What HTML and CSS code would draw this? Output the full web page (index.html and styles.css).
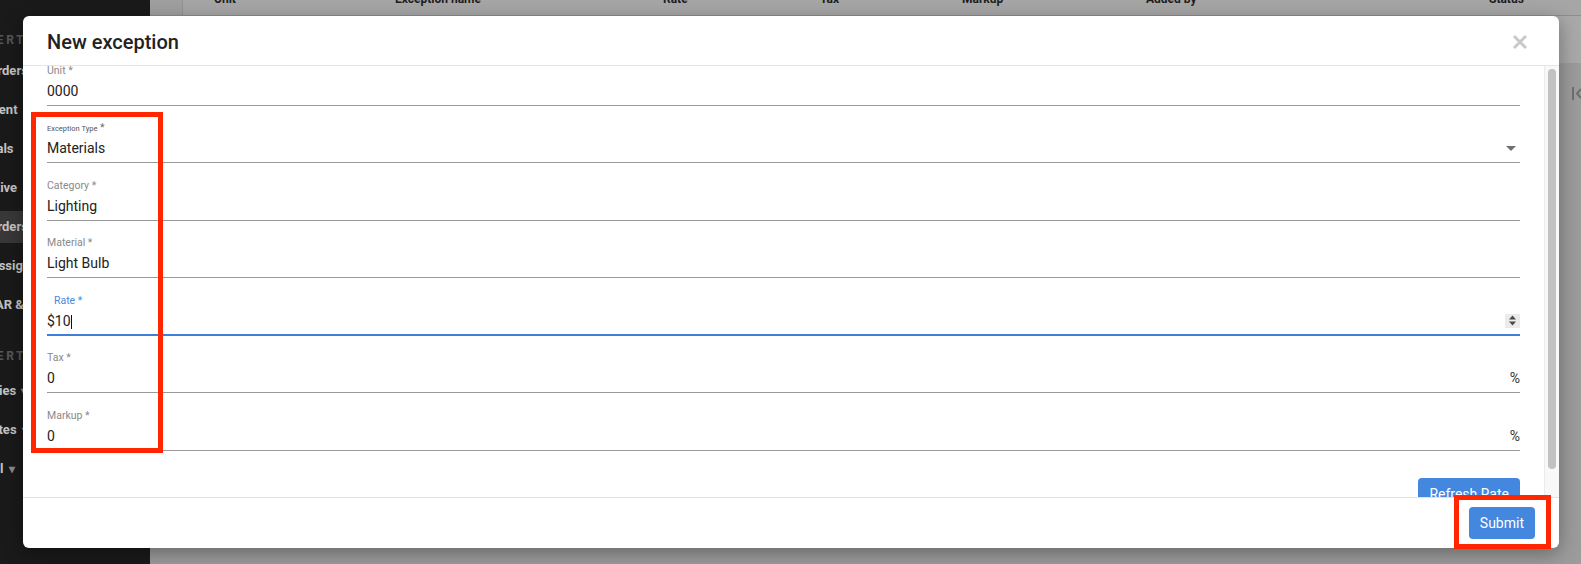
FILE: index.html
```html
<!DOCTYPE html>
<html lang="en">
<head>
    <meta charset="UTF-8">
    <meta name="viewport" content="width=device-width, initial-scale=1.0">
    <title>New exception</title>
    <link rel="stylesheet" href="styles.css">
</head>
<body>
    <div class="page">
        <nav class="sidebar">
            <div class="side-nav">
                <div class="side-title">PROPERTY</div>
                <div class="side-item">Work Orders</div>
                <div class="side-item">Equipment</div>
                <div class="side-item">Approvals</div>
                <div class="side-item">Preventive</div>
                <div class="side-item active">Work Orders</div>
                <div class="side-item">Mass Assign</div>
                <div class="side-item">Billing AR &amp; AP</div>
                <div class="side-title spaced">PROPERTY</div>
                <div class="side-item">Properties <span class="caret">&#9662;</span></div>
                <div class="side-item">Templates <span class="caret">&#9662;</span></div>
                <div class="side-item">Material <span class="caret">&#9662;</span></div>
            </div>
        </nav>
        <main class="main">
            <div class="table-head">
                <div class="th check"></div>
                <div class="th unit">Unit</div>
                <div class="th">Exception name</div>
                <div class="th">Rate</div>
                <div class="th">Tax</div>
                <div class="th">Markup</div>
                <div class="th">Added by</div>
                <div class="th">Status</div>
            </div>
            <div class="table-row"></div>
            <div class="toolbar">
                <svg width="12" height="13" viewBox="0 0 12 13">
                    <rect x="0" y="0" width="2" height="13" fill="#6f6f6f"/>
                    <path d="M9 2 L5 6.5 L9 11" stroke="#6f6f6f" stroke-width="2" fill="none"/>
                </svg>
            </div>
        </main>
    </div>

    <!-- modal -->
    <div class="modal">
        <div class="modal-header">
            <h2 class="modal-title">New exception</h2>
            <svg class="close" width="16" height="16" viewBox="0 0 16 16">
                <path d="M2 2 L14 14 M14 2 L2 14" stroke="#c9c9c9" stroke-width="3"/>
            </svg>
        </div>
        <div class="modal-body">
            <div class="body-content">
                <div class="form">
                    <div class="field">
                        <div class="label">Unit *</div>
                        <div class="control">0000</div>
                    </div>
                    <div class="field">
                        <div class="label label-dark"><span class="tiny">Exception Type</span> *</div>
                        <div class="control">
                            <span class="value">Materials</span>
                            <svg width="10" height="5" viewBox="0 0 10 5" class="arrow"><path d="M0 0 L10 0 L5 5 Z" fill="#707070"/></svg>
                        </div>
                    </div>
                    <div class="field">
                        <div class="label">Category *</div>
                        <div class="control">Lighting</div>
                    </div>
                    <div class="field">
                        <div class="label">Material *</div>
                        <div class="control">Light Bulb</div>
                    </div>
                    <div class="field focused">
                        <div class="label">Rate *</div>
                        <div class="control">
                            <span class="value">$10<span class="cursor"></span></span>
                            <svg width="15" height="14" viewBox="0 0 15 14" class="spinner">
                                <rect width="15" height="14" fill="#ebebeb"/>
                                <path d="M4 5.5 L7.5 1.5 L11 5.5 Z M4 7.5 L11 7.5 L7.5 11.5 Z" fill="#4a4a4a"/>
                            </svg>
                        </div>
                    </div>
                    <div class="field">
                        <div class="label">Tax *</div>
                        <div class="control"><span class="value">0</span><span class="suffix">%</span></div>
                    </div>
                    <div class="field">
                        <div class="label">Markup *</div>
                        <div class="control"><span class="value">0</span><span class="suffix">%</span></div>
                    </div>
                </div>
                <div class="actions">
                    <button class="btn">Refresh Rate</button>
                </div>
            </div>
            <div class="scroll-gutter">
                <div class="scroll-thumb"></div>
            </div>
        </div>
        <div class="modal-footer">
            <button class="btn">Submit</button>
        </div>
    </div>

    <!-- annotation boxes -->
    <div class="mark mark-fields"></div>
    <div class="mark mark-submit"></div>
</body>
</html>
```

FILE: styles.css
```css
* {
    margin: 0;
    padding: 0;
    box-sizing: border-box;
}
body {
    width: 1581px;
    height: 564px;
    overflow: hidden;
    position: relative;
    font-family: Roboto, 'Liberation Sans', sans-serif;
    background: #9c9c9c;
}
.page {
    display: flex;
    height: 100%;
}
.sidebar {
    width: 150px;
    flex-shrink: 0;
    background: #1a1a1a;
    overflow: hidden;
}
.side-nav {
    margin-left: -45px;
    padding-top: 28px;
    white-space: nowrap;
}
.side-title {
    height: 24px;
    line-height: 24px;
    font-size: 12px;
    font-weight: bold;
    letter-spacing: 2.6px;
    color: #575757;
    margin-bottom: 3px;
}
.side-title.spaced {
    margin-top: 23px;
    margin-bottom: 7px;
}
.side-item {
    height: 32px;
    line-height: 32px;
    margin-bottom: 7px;
    font-size: 13px;
    font-weight: bold;
    color: #c4c4c4;
}
.side-item.active {
    background: #383838;
}
.caret {
    font-size: 12px;
    margin-left: 2px;
    color: #8a8a8a;
}
.main {
    flex: 1;
    display: flex;
    flex-direction: column;
    overflow: hidden;
}
.table-head {
    display: grid;
    grid-template-columns: 33px 212px 268px 157px 142px 184px 343px 1fr;
    height: 16px;
    background: #a6a6a6;
    border-bottom: 1px solid #8e8e8e;
    overflow: hidden;
    flex-shrink: 0;
}
.th {
    font-size: 12px;
    font-weight: bold;
    line-height: 12px;
    color: #1e1e1e;
    margin-top: -7px;
    white-space: nowrap;
}
.th.check {
    margin-top: 0;
    border-right: 1px solid #939393;
    background: #a0a0a0;
}
.th.unit {
    padding-left: 31px;
}
.table-row {
    height: 47px;
    background: #a9a9a9;
    flex-shrink: 0;
}
.toolbar {
    display: flex;
    justify-content: flex-end;
    padding-top: 24px;
    margin-right: -3px;
}

/* modal */
.modal {
    position: absolute;
    left: 23px;
    top: 16px;
    width: 1536px;
    height: 532px;
    background: #fff;
    border-radius: 6px;
    display: flex;
    flex-direction: column;
    overflow: hidden;
    box-shadow: 0 5px 20px rgba(0, 0, 0, 0.35);
}
.modal-header {
    display: flex;
    justify-content: space-between;
    align-items: center;
    padding: 14px 31px 11px 24px;
    border-bottom: 1px solid #e5e5e5;
    flex-shrink: 0;
}
.modal-title {
    font-size: 20px;
    font-weight: 500;
    line-height: 24px;
    color: #222;
}
.modal-body {
    flex: 1;
    display: flex;
    min-height: 0;
}
.body-content {
    flex: 1;
    overflow: hidden;
    padding: 0 24px;
}
.form {
    display: flex;
    flex-direction: column;
    gap: 16.5px;
    margin-top: -1.5px;
}
.field {
    height: 41px;
}
.label {
    height: 14px;
    line-height: 12px;
    font-size: 10.5px;
    color: #898989;
    white-space: nowrap;
}
.label-dark {
    color: #6a6a6a;
}
.tiny {
    font-size: 7.5px;
    color: #555;
}
.control {
    display: flex;
    align-items: center;
    height: 27px;
    padding-bottom: 2px;
    line-height: 24px;
    font-size: 14px;
    color: #222;
    border-bottom: 1px solid #9a9a9a;
}
.value {
    flex: 1;
}
.arrow {
    margin-right: 4px;
}
.suffix {
    color: #333;
}
.focused .label {
    color: #4a88e0;
    padding-left: 7px;
}
.focused .control {
    border-bottom: 2px solid #3f7fdc;
    padding-bottom: 1px;
}
.cursor {
    display: inline-block;
    width: 1px;
    height: 14px;
    background: #111;
    vertical-align: -3px;
}
.actions {
    display: flex;
    justify-content: flex-end;
    margin-top: 27.5px;
}
.btn {
    height: 32px;
    padding: 0 11px;
    border: none;
    border-radius: 4px;
    background: #4387df;
    color: #fff;
    font-family: Roboto, 'Liberation Sans', sans-serif;
    font-size: 14px;
}
.scroll-gutter {
    width: 15px;
    flex-shrink: 0;
    background: #f8f8f8;
    border-left: 1px solid #ebebeb;
    padding: 3px 3px 0 3px;
}
.scroll-thumb {
    height: 400px;
    background: #c1c1c1;
    border-radius: 4px;
}
.modal-footer {
    height: 51px;
    flex-shrink: 0;
    display: flex;
    justify-content: flex-end;
    align-items: center;
    padding: 0 24px;
    border-top: 1px solid #e3e3e3;
}

/* red annotation boxes */
.mark {
    position: absolute;
    border: 5px solid #ff2600;
}
.mark-fields {
    left: 31px;
    top: 112px;
    width: 132px;
    height: 341px;
}
.mark-submit {
    left: 1454px;
    top: 495px;
    width: 97px;
    height: 54px;
}
```
